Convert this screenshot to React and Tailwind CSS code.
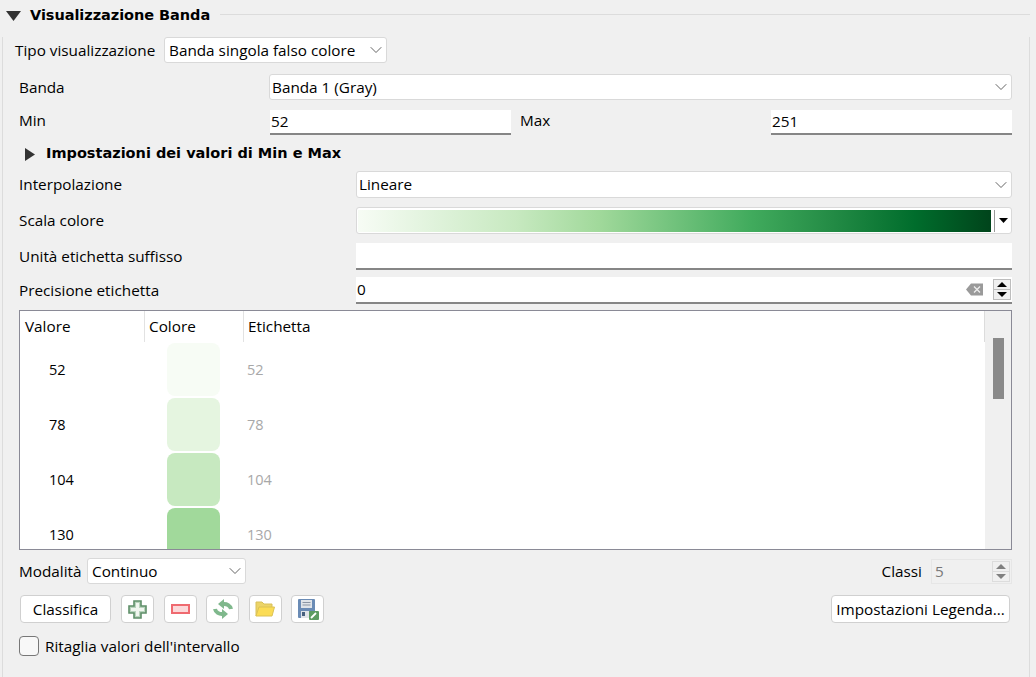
import React from "react";
import { ChevronDown } from "lucide-react";

const font = "font-['Open_Sans','Noto_Sans',sans-serif]";

const rows = [
  { value: "52", color: "bg-[#f7fcf5]" },
  { value: "78", color: "bg-[#e5f5e0]" },
  { value: "104", color: "bg-[#c7e9c0]" },
  { value: "130", color: "bg-[#a1d99b]" },
];

function Combo({ text, className }) {
  return (
    <div className={`h-[26px] flex items-center justify-between bg-white border border-[#d9d9d9] rounded-[3px] ${className}`}>
      <span>{text}</span>
      <ChevronDown size={20} strokeWidth={1.1} className="text-[#555]" />
    </div>
  );
}

function LineInput({ text, className, children }) {
  return (
    <div className={`flex items-center justify-between bg-white border-b-2 border-[#868686] pl-[1px] ${className}`}>
      <span>{text}</span>
      {children}
    </div>
  );
}

function Spin({ dim }) {
  const cls = dim ? "border-[#dcdcdc] text-[#808080]" : "border-[#bdbdbd] text-black";
  return (
    <div className={`w-[18px] h-[21px] flex flex-col border bg-[#f0f0f0] ${cls}`}>
      <div className="flex-1 flex items-center justify-center border-b border-inherit">
        <svg width="10" height="5" viewBox="0 0 10 5"><path d="M5 0 10 5H0z" fill="currentColor" /></svg>
      </div>
      <div className="flex-1 flex items-center justify-center">
        <svg width="10" height="5" viewBox="0 0 10 5"><path d="M0 0h10L5 5z" fill="currentColor" /></svg>
      </div>
    </div>
  );
}

function IconBtn({ children }) {
  return (
    <button className="w-[33px] h-[28px] flex items-center justify-center bg-white border border-[#d0d0d0] rounded-[4px]">
      {children}
    </button>
  );
}

export default function App() {
  return (
    <div className={`w-[1036px] h-[677px] overflow-hidden bg-[#f0f0f0] text-[15.3px] text-black ${font}`}>
      <div className="h-[25px] pl-[6px] pt-[6px] flex items-center">
        <svg width="15" height="10" viewBox="0 0 15 10"><path d="M0 0h15L7.5 10z" fill="#333" /></svg>
        <span className="ml-[9px] font-['DejaVu_Sans'] font-bold text-[14.5px] tracking-[-0.05px]">Visualizzazione Banda</span>
        <div className="ml-[10px] mr-[6px] mt-[-3px] flex-1 h-px bg-[#dcdcdc]" />
      </div>

      <div className="ml-[2px] mr-[6px] h-[648px] border-l border-r border-b border-[#dcdcdc] pl-[16px] pr-[17px]">
        <div className="flex items-center mt-[12px] ml-[-4px] h-[26px]">
          <span className="w-[149px] whitespace-nowrap">Tipo visualizzazione</span>
          <Combo text="Banda singola falso colore" className="w-[223px] pl-1" />
        </div>

        <div className="flex items-center mt-[11px] h-[26px]">
          <span className="w-[250px]">Banda</span>
          <Combo text="Banda 1 (Gray)" className="flex-1 pl-[2px]" />
        </div>

        <div className="flex items-center mt-[9px] h-[26px]">
          <span className="w-[251px] mt-[-3px]">Min</span>
          <LineInput text="52" className="w-[241px] h-[25px]" />
          <span className="w-[260px] pl-[9px] mt-[-3px]">Max</span>
          <LineInput text="251" className="flex-1 h-[25px]" />
        </div>

        <div className="flex items-center mt-[7px] h-[24px] pl-[6px]">
          <svg width="10" height="13" viewBox="0 0 10 13"><path d="M0 0l10 6.5L0 13z" fill="#333" /></svg>
          <span className="ml-[11px] font-['DejaVu_Sans'] font-bold text-[14.5px]">Impostazioni dei valori di Min e Max</span>
        </div>

        <div className="flex items-center mt-[5px] h-[27px]">
          <span className="w-[337px]">Interpolazione</span>
          <Combo text="Lineare" className="flex-1 h-[27px] pl-[2px]" />
        </div>

        <div className="flex items-center mt-[9px] h-[27px]">
          <span className="w-[337px]">Scala colore</span>
          <div className="flex-1 h-[27px] flex items-center bg-white border border-[#d9d9d9] rounded-[3px] pl-[1px]">
            <div className="w-[633px] h-[22px] bg-[linear-gradient(to_right,#f7fcf5,#c7e9c0_25%,#a1d99b_38%,#41ab5d_62%,#238b45_75%,#006d2c_88%,#00441b)]" />
            <div className="ml-[3px] w-px h-[22px] bg-[#999]" />
            <div className="flex-1 flex justify-center">
              <svg width="9" height="5" viewBox="0 0 9 5"><path d="M0 0h9L4.5 5z" fill="#000" /></svg>
            </div>
          </div>
        </div>

        <div className="flex items-center mt-[9px] h-[27px]">
          <span className="w-[337px]">Unità etichetta suffisso</span>
          <LineInput className="flex-1 h-[27px]" />
        </div>

        <div className="flex items-center mt-[7px] h-[27px]">
          <span className="w-[337px]">Precisione etichetta</span>
          <LineInput text="0" className="flex-1 h-[27px] pr-[1px]">
            <div className="flex items-center gap-[10px]">
              <svg width="17" height="13" viewBox="0 0 17 13">
                <path d="M5 0.5h12v12H5L0 6.5z" fill="#9a9a9a" />
                <path d="M8 3.5l6 6M14 3.5l-6 6" stroke="#eee" strokeWidth="1.3" />
              </svg>
              <Spin />
            </div>
          </LineInput>
        </div>

        <div className="mt-[6px] h-[240px] border border-[#8a8a96] flex overflow-hidden bg-white">
          <div className="flex-1 min-w-0">
            <div className="flex h-[31px] items-center">
              <span className="w-[125px] pl-[5px] h-full flex items-center border-r border-[#e2e2e2]">Valore</span>
              <span className="w-[99px] pl-[4px] h-full flex items-center border-r border-[#e2e2e2]">Colore</span>
              <span className="pl-[4px]">Etichetta</span>
            </div>
            {rows.map((r) => (
              <div key={r.value} className="flex h-[55px] items-center">
                <span className="w-[147px] pl-[29px] text-[14.5px]">{r.value}</span>
                <div className={`w-[53px] h-[53px] shrink-0 rounded-[8px] ${r.color}`} />
                <span className="ml-[27px] text-[14.5px] text-[#a8a8a8]">{r.value}</span>
              </div>
            ))}
          </div>
          <div className="w-[26px] bg-[#f0f0f0] relative flex justify-center">
            <div className="absolute left-[-1px] top-0 w-px h-[31px] bg-[#dcdcdc]" />
            <div className="mt-[27px] ml-[1px] w-[11px] h-[61px] bg-[#8a8a8a]" />
          </div>
        </div>

        <div className="flex items-center mt-[8px] h-[26px]">
          <span className="w-[68px]">Modalità</span>
          <Combo text="Continuo" className="w-[159px] pl-1" />
          <span className="ml-auto">Classi</span>
          <div className="ml-[9px] w-[81px] h-[25px] flex items-center justify-between border border-[#e6e6e6] pl-[3px] pr-px text-[#777]">
            <span>5</span>
            <Spin dim />
          </div>
        </div>

        <div className="flex items-center mt-[11px] h-[28px] ml-[1px] mr-[2px]">
          <button className="w-[91px] h-[28px] bg-white border border-[#d0d0d0] rounded-[4px]">Classifica</button>
          <div className="flex gap-[9.5px] ml-[10px]">
            <IconBtn>
              <svg width="19" height="19" viewBox="0 0 19 19">
                <path d="M6 1h7v5h5v7h-5v5H6v-5H1V6h5z" fill="#b9d4bd" stroke="#5f8f69" strokeWidth="1.6" />
                <path d="M8 3h3v5h5v3h-5v5H8v-5H3V8h5z" fill="#f1f6f0" />
              </svg>
            </IconBtn>
            <IconBtn>
              <svg width="19" height="10" viewBox="0 0 19 10">
                <rect x="1" y="1" width="17" height="8" fill="#fbd9da" stroke="#ef6a70" strokeWidth="2" />
              </svg>
            </IconBtn>
            <IconBtn>
              <svg width="22" height="20" viewBox="0 0 22 20">
                <path d="M19 10A7 6 0 0 0 11 5" fill="none" stroke="#7fb88c" strokeWidth="4" />
                <path d="M12 0L6 5l6 5z" fill="#7fb88c" />
                <path d="M3 10a7 6 0 0 0 8 5" fill="none" stroke="#7fb88c" strokeWidth="4" />
                <path d="M10 10l6 5-6 5z" fill="#7fb88c" />
              </svg>
            </IconBtn>
            <IconBtn>
              <svg width="20" height="16" viewBox="0 0 20 16">
                <path d="M1 15V1h6l2 2h8v4" fill="#ecd467" stroke="#d8c05a" />
                <path d="M4 6h15.5L17 15H1z" fill="#fbdc55" stroke="#dcc255" />
              </svg>
            </IconBtn>
            <IconBtn>
              <svg width="22" height="22" viewBox="0 0 22 22">
                <rect x="1" y="1" width="17" height="19" rx="1" fill="#6a8bb5" />
                <rect x="4" y="2" width="11" height="8" fill="#dfe3e8" />
                <path d="M5.5 4.5h8M5.5 7h8" stroke="#8a94a3" />
                <rect x="4" y="13" width="8" height="7" fill="#dfe3e8" />
                <rect x="5" y="14" width="3" height="4" fill="#46607f" />
                <rect x="12" y="13" width="10" height="9" rx="1" fill="#5d9b63" />
                <path d="M14 20l5-5" stroke="#fff" strokeWidth="1.8" />
              </svg>
            </IconBtn>
          </div>
          <button className="ml-auto w-[179px] h-[28px] bg-white border border-[#d0d0d0] rounded-[4px] whitespace-nowrap">Impostazioni Legenda...</button>
        </div>

        <div className="flex items-center mt-[13px] h-[20px]">
          <div className="w-[20px] h-[20px] bg-[#f8f8f8] border border-[#777] rounded-[4px]" />
          <span className="ml-[6px]">Ritaglia valori dell'intervallo</span>
        </div>
      </div>
    </div>
  );
}
